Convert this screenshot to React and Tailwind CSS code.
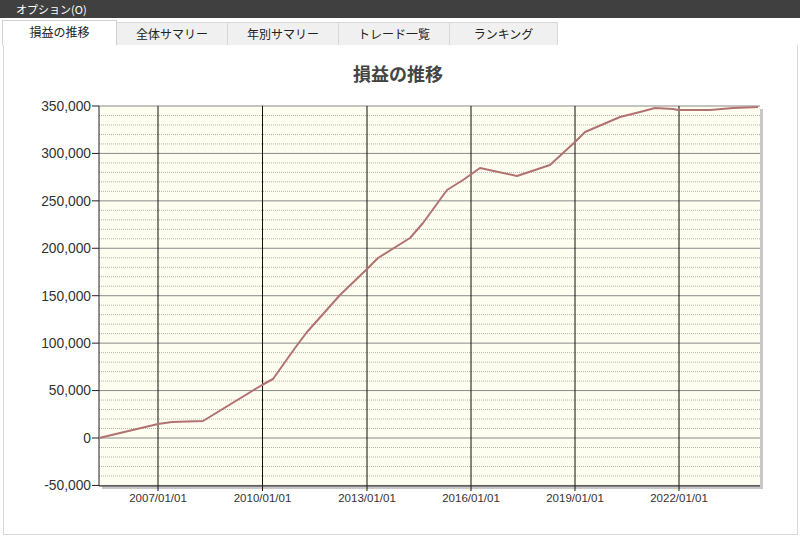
import React from "react";

const Y0 = 438;
const PX = 47.43 / 50000;
const yv = (v) => Y0 - v * PX;

const points = [
  [99, 438], [158, 424], [172, 422], [203, 421], [262, 385], [273, 379], [295, 348],
  [307, 332], [340, 295], [367, 269], [378, 258], [410, 238], [423, 223], [447, 190],
  [463, 180], [480, 168], [517, 176], [550, 165], [575, 142], [585, 132], [620, 117],
  [640, 112], [655, 108], [673, 109], [678, 110], [710, 110], [733, 108], [758, 107],
];

const yLabels = [350000, 300000, 250000, 200000, 150000, 100000, 50000, 0, -50000];
const xLines = [
  [158, "2007/01/01"], [262.5, "2010/01/01"], [367, "2013/01/01"],
  [471, "2016/01/01"], [575, "2019/01/01"], [679, "2022/01/01"],
];

function fmt(v) {
  return v.toLocaleString("en-US");
}

function Chart() {
  const minors = [];
  for (let v = -50000; v <= 350000; v += 10000) {
    if (v % 50000 !== 0) minors.push(v);
  }
  return (
    <svg width="794" height="488" className="block">
      <g transform="translate(-4,-45)">
        <text x="398" y="81" textAnchor="middle" fontSize="18" fontWeight="bold" fill="#444"
          className="font-['Noto_Sans_CJK_JP',sans-serif]">損益の推移</text>
        <rect x="102" y="109" width="661" height="380" fill="#c8c8c8" />
        <rect x="99" y="106" width="661" height="380" fill="#fdfdf0" />
        {minors.map((v) => (
          <line key={v} x1="99" x2="760" y1={yv(v)} y2={yv(v)} stroke="#b4b4a8" strokeWidth="1" strokeDasharray="1 1" />
        ))}
        {yLabels.map((v) => (
          <line key={v} x1="99" x2="760" y1={yv(v)} y2={yv(v)} stroke="#8a8a8a" strokeWidth="1" />
        ))}
        {xLines.map(([x]) => (
          <line key={x} x1={x} x2={x} y1="106" y2="491" stroke="#111" strokeWidth="1" />
        ))}
        <line x1="99" x2="99" y1="106" y2="486" stroke="#222" strokeWidth="1" />
        <line x1="99" x2="760" y1="486" y2="486" stroke="#333" strokeWidth="1.2" />
        <g className="font-['Liberation_Sans',Arial,sans-serif]">
          {yLabels.map((v) => (
            <g key={"l" + v}>
              <line x1="92" x2="99" y1={yv(v)} y2={yv(v)} stroke="#222" strokeWidth="1" />
              <text x="91" y={yv(v) + 4.8} textAnchor="end" fontSize="13.8" fill="#333">{fmt(v)}</text>
            </g>
          ))}
          {xLines.map(([x, t]) => (
            <text key={t} x={x} y="502" textAnchor="middle" fontSize="11.5" fill="#333">{t}</text>
          ))}
        </g>
        <polyline points={points.map((p) => p.join(",")).join(" ")} fill="none" stroke="#b27272" strokeWidth="2" strokeLinejoin="round" />
      </g>
    </svg>
  );
}

const tabs = ["全体サマリー", "年別サマリー", "トレード一覧", "ランキング"];

export default function App() {
  return (
    <div className="w-[800px] h-[538px] bg-white overflow-hidden font-['Noto_Sans_CJK_JP',sans-serif]">
      <div className="h-[18px] bg-[#404040] text-white text-[11px] leading-[18px] pl-[16px]">オプション(O)</div>
      <div className="flex items-end h-[27px] pl-[2px]">
        <div className="w-[115px] h-[25px] bg-white border border-b-0 border-[#d0d0d0] text-[12px] text-[#222] flex items-center justify-center pb-[2px]">損益の推移</div>
        {tabs.map((t, i) => (
          <div key={t} className={`${i === 3 ? "w-[108px]" : "w-[111px]"} h-[23px] bg-[#f0f0f0] border border-l-0 border-b-0 border-[#d8d8d8] text-[12px] text-[#222] flex items-center justify-center`}>{t}</div>
        ))}
      </div>
      <div className="ml-[3px] w-[795px] h-[490px] border border-t-0 border-[#d8d8d8] bg-white">
        <Chart />
      </div>
    </div>
  );
}
